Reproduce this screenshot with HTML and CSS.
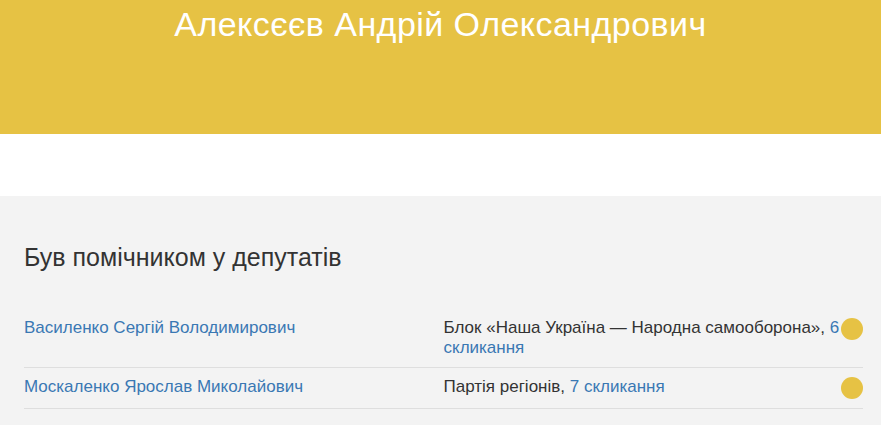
FILE: index.html
```html
<!DOCTYPE html>
<html lang="uk">
<head>
  <meta charset="UTF-8">
  <title>Алексєєв Андрій Олександрович</title>
  <link rel="stylesheet" href="styles.css">
</head>
<body>

  <header class="hero">
    <h1>Алексєєв Андрій Олександрович</h1>
  </header>

  <div class="spacer"></div>

  <section class="assistant">
    <h2>Був помічником у депутатів</h2>

    <div class="deputies">
      <div class="deputy">
        <a class="deputy-name" href="#">Василенко Сергій Володимирович</a>
        <div class="deputy-party">
          <span>Блок «Наша Україна — Народна самооборона», <a href="#">6 скликання</a></span>
          <span class="dot"></span>
        </div>
      </div>
      <div class="deputy">
        <a class="deputy-name" href="#">Москаленко Ярослав Миколайович</a>
        <div class="deputy-party">
          <span>Партія регіонів, <a href="#">7 скликання</a></span>
          <span class="dot"></span>
        </div>
      </div>
    </div>
  </section>

</body>
</html>
```

FILE: styles.css
```css
* {
  margin: 0;
  padding: 0;
  box-sizing: border-box;
}

body {
  font-family: 'Liberation Sans', Arial, sans-serif;
  font-size: 17px;
  line-height: 20px;
  color: #333;
  background: #f3f3f3;
  overflow: hidden;
}

a {
  color: #3a78b3;
  text-decoration: none;
}

.hero {
  background: #e6c244;
  height: 134px;
  text-align: center;
}

.hero h1 {
  color: white;
  font-weight: normal;
  font-size: 34px;
  line-height: 38px;
  letter-spacing: 0.45px;
  padding-top: 5px;
}

.spacer {
  background: white;
  height: 62px;
}

.assistant {
  padding: 46px 18px 0 24px;
}

.assistant h2 {
  font-weight: normal;
  font-size: 25px;
  line-height: 30px;
  margin-bottom: 37px;
}

.deputy {
  display: grid;
  grid-template-columns: 1fr 1fr;
  padding: 9px 0;
  border-bottom: 1px solid #dedede;
}

.deputy-party {
  display: flex;
  align-items: flex-start;
}

.deputy-party span:first-child {
  flex: 1;
}

.dot {
  width: 22px;
  height: 22px;
  border-radius: 50%;
  background: #e6c244;
  flex-shrink: 0;
}
```
